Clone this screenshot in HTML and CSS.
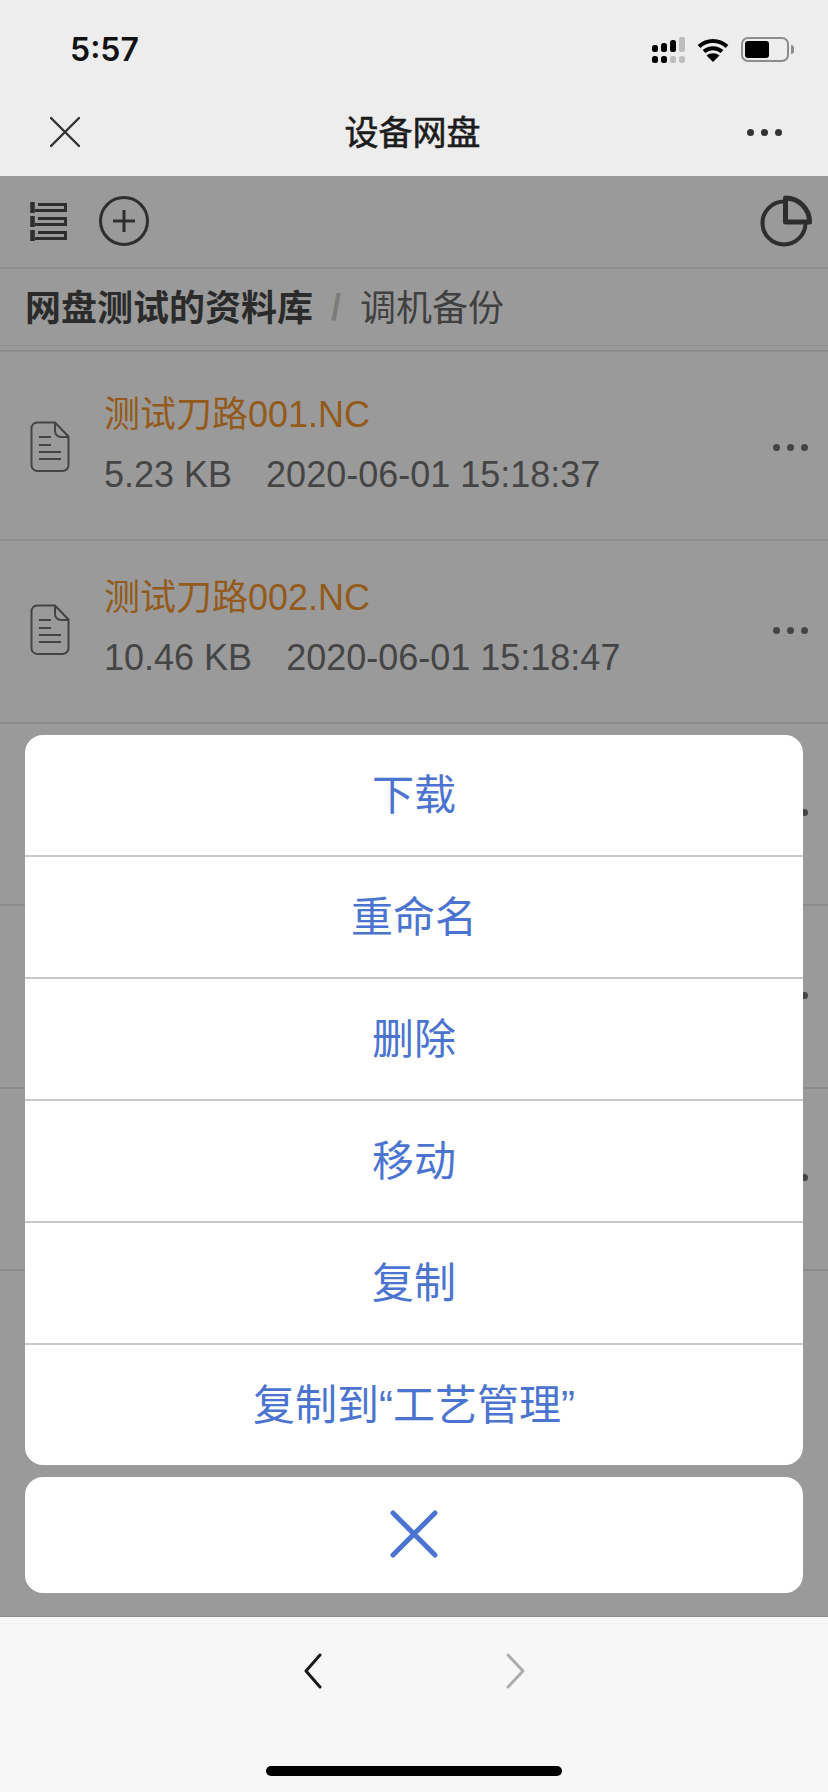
FILE: index.html
```html
<!DOCTYPE html>
<html lang="zh-CN">
<head>
    <meta charset="UTF-8">
    <meta name="viewport" content="width=device-width, initial-scale=1.0">
    <title>设备网盘</title>
    <link rel="stylesheet" href="styles.css">
</head>
<body>
    <div class="phone">
        <!-- Status bar -->
        <div class="status-bar">
            <span class="time">5:57</span>
            <div class="status-icons">
                <svg width="33" height="26" viewBox="0 0 33 26">
                    <g fill="#000">
                        <rect x="0" y="8" width="6" height="7" rx="2.500"/>
                        <rect x="9" y="6" width="6" height="9" rx="2.500"/>
                        <rect x="18" y="3" width="6" height="12" rx="2.500"/>
                        <rect x="0" y="19" width="6" height="7" rx="2.500"/>
                        <rect x="9" y="19" width="6" height="7" rx="2.500"/>
                    </g>
                    <g fill="#bdbdbd">
                        <rect x="27" y="0" width="6" height="15" rx="2"/>
                        <rect x="18" y="19" width="6" height="7" rx="2.500"/>
                        <rect x="27" y="19" width="6" height="7" rx="2.500"/>
                    </g>
                </svg>
                <svg width="32" height="24" viewBox="0 0 32 24">
                    <path d="M2 8.500C10 1 22 1 30 8.500M7 13.500C12 9 20 9 25 13.500" fill="none" stroke="#000" stroke-width="4"/>
                    <path d="M16 24l-6.500-6.500C13 14.500 19 14.500 22.500 17.500z" fill="#000"/>
                </svg>
                <div class="battery">
                    <div class="battery-body"><div class="battery-level"></div></div>
                    <div class="battery-cap"></div>
                </div>
            </div>
        </div>

        <!-- Title bar -->
        <header class="title-bar">
            <div class="title-side">
                <svg width="30" height="30" viewBox="0 0 30 30">
                    <path d="M1 1l28 28M29 1L1 29" fill="none" stroke="#333" stroke-width="2.400" stroke-linecap="round"/>
                </svg>
            </div>
            <h1 class="title">设备网盘</h1>
            <div class="title-side title-side-right">
                <div class="more-dots"><i></i><i></i><i></i></div>
            </div>
        </header>

        <div class="content">
            <!-- Toolbar -->
            <div class="toolbar">
                <div class="toolbar-left">
                    <svg width="38" height="40" viewBox="0 0 38 40">
                        <g fill="none" stroke="#2e2e2e">
                            <path stroke-width="4.500" d="M2.500 1v11M2.500 15v11M2.500 29v11"/>
                            <path stroke-width="3" d="M5 9.500h30.500v-6H8M5 23.500h30.500v-6H8M5 37.500h30.500v-6H8"/>
                        </g>
                    </svg>
                    <svg width="50" height="50" viewBox="0 0 50 50">
                        <circle cx="25" cy="25" r="23.500" fill="none" stroke="#2e2e2e" stroke-width="3"/>
                        <path d="M14 25h22M25 14v22" fill="none" stroke="#2e2e2e" stroke-width="3"/>
                    </svg>
                </div>
                <svg width="52" height="52" viewBox="0 0 52 52">
                    <path d="M24 6.500A21.500 21.500 0 1 0 45.500 28" fill="none" stroke="#2e2e2e" stroke-width="4"/>
                    <path d="M25.500 3A24 24 0 0 1 49.500 27H25.500z" fill="none" stroke="#2e2e2e" stroke-width="5" stroke-linejoin="round"/>
                </svg>
            </div>

            <!-- Breadcrumb -->
            <div class="breadcrumb">
                <span class="crumb-root">网盘测试的资料库</span>
                <span class="crumb-sep">/</span>
                <span class="crumb-current">调机备份</span>
            </div>

            <!-- Files -->
            <ul class="file-list">
                <li class="file-row">
                    <svg class="file-icon" width="40" height="52" viewBox="0 0 40 52">
                        <path d="M7 1.500h18l13.500 14V44a6 6 0 0 1-6 6H7a6 6 0 0 1-5.500-6V7A6 6 0 0 1 7 1.500zM25 1.500V10a6 6 0 0 0 6 6h7.500M9 16h12M9 24h12M9 31h22M9 38h22" fill="none" stroke="#444" stroke-width="2"/>
                    </svg>
                    <div class="file-info">
                        <div class="file-name">测试刀路001.NC</div>
                        <div class="file-meta"><span>5.23 KB</span><span>2020-06-01 15:18:37</span></div>
                    </div>
                    <div class="more-dots row-dots"><i></i><i></i><i></i></div>
                </li>
                <li class="file-row">
                    <svg class="file-icon" width="40" height="52" viewBox="0 0 40 52">
                        <path d="M7 1.500h18l13.500 14V44a6 6 0 0 1-6 6H7a6 6 0 0 1-5.500-6V7A6 6 0 0 1 7 1.500zM25 1.500V10a6 6 0 0 0 6 6h7.500M9 16h12M9 24h12M9 31h22M9 38h22" fill="none" stroke="#444" stroke-width="2"/>
                    </svg>
                    <div class="file-info">
                        <div class="file-name">测试刀路002.NC</div>
                        <div class="file-meta"><span>10.46 KB</span><span>2020-06-01 15:18:47</span></div>
                    </div>
                    <div class="more-dots row-dots"><i></i><i></i><i></i></div>
                </li>
                <li class="file-row"><div class="more-dots row-dots push"><i></i><i></i><i></i></div></li>
                <li class="file-row"><div class="more-dots row-dots push"><i></i><i></i><i></i></div></li>
                <li class="file-row"><div class="more-dots row-dots push"><i></i><i></i><i></i></div></li>
            </ul>

            <!-- Action sheet lies over the list -->
            <div class="sheet">
                <div class="sheet-group">
                    <div class="sheet-item">下载</div>
                    <div class="sheet-item">重命名</div>
                    <div class="sheet-item">删除</div>
                    <div class="sheet-item">移动</div>
                    <div class="sheet-item">复制</div>
                    <div class="sheet-item">复制到“工艺管理”</div>
                </div>
                <div class="sheet-cancel">
                    <svg width="48" height="48" viewBox="0 0 48 48">
                        <path d="M3 3l42 42M45 3L3 45" fill="none" stroke="#4b74d0" stroke-width="5" stroke-linecap="round"/>
                    </svg>
                </div>
            </div>
        </div>

        <!-- Bottom browser nav -->
        <footer class="bottom-bar">
            <div class="nav-arrows">
                <svg width="20" height="36" viewBox="0 0 20 36">
                    <path d="M17 2L3 18l14 16" fill="none" stroke="#1a1a1a" stroke-width="3" stroke-linecap="round" stroke-linejoin="round"/>
                </svg>
                <svg width="20" height="36" viewBox="0 0 20 36">
                    <path d="M2 2l15 16L2 34" fill="none" stroke="#adadad" stroke-width="3" stroke-linecap="round" stroke-linejoin="round"/>
                </svg>
            </div>
            <div class="home-bar"></div>
        </footer>
    </div>
</body>
</html>
```
FILE: styles.css
```css
/* Reset and general styling */
* {
    margin: 0;
    padding: 0;
    box-sizing: border-box;
}

body {
    background-color: #f7f7f7;
    font-family: "Liberation Sans", "Noto Sans CJK SC", sans-serif;
    color: #333;
}

.phone {
    width: 828px;
    height: 1792px;
    display: flex;
    flex-direction: column;
    overflow: hidden;
}

/* Status bar */
.status-bar {
    height: 88px;
    background-color: #ededed;
    display: flex;
    justify-content: space-between;
    align-items: center;
    padding: 11px 34px 0 70px;
}

.time {
    font-family: Inter, "Liberation Sans", sans-serif;
    font-size: 32px;
    font-weight: 600;
    color: #111;
}

.status-icons {
    display: flex;
    align-items: center;
    gap: 12px;
}

.battery {
    display: flex;
    align-items: center;
    gap: 2px;
}

.battery-body {
    width: 48px;
    height: 25px;
    border: 2px solid #8d8d8d;
    border-radius: 7px;
    padding: 2px;
}

.battery-level {
    width: 24px;
    height: 100%;
    background-color: #000;
    border-radius: 3px;
}

.battery-cap {
    width: 3px;
    height: 9px;
    background-color: #8d8d8d;
    border-radius: 0 3px 3px 0;
}

/* Title bar */
.title-bar {
    height: 88px;
    background-color: #ededed;
    display: flex;
    align-items: center;
    padding: 0 46px 0 43px;
}

.title-side {
    flex: 1;
    display: flex;
    align-items: center;
    padding-left: 7px;
}

.title-side-right {
    justify-content: flex-end;
}

.title {
    font-size: 34px;
    font-weight: 400;
    color: #1c1c1c;
    -webkit-text-stroke: 0.6px #1c1c1c;
    margin-bottom: 4px;
}

.more-dots {
    display: flex;
    gap: 7px;
}

.more-dots i {
    display: block;
    width: 7px;
    height: 7px;
    border-radius: 50%;
    background-color: #333;
}

/* Dimmed page */
.content {
    position: relative;
    height: 1440px;
    background-color: #9a9a9a;
}

.toolbar {
    height: 93px;
    border-bottom: 2px solid #8c8c8c;
    display: flex;
    justify-content: space-between;
    align-items: center;
    padding: 0 16px 2px 30px;
}

.toolbar-left {
    display: flex;
    align-items: center;
    gap: 31px;
}

.breadcrumb {
    height: 83px;
    border-bottom: 2px solid #8c8c8c;
    box-shadow: inset 0 -4px 0 #9a9a9a, inset 0 -5px 0 #939393;
    display: flex;
    align-items: center;
    padding: 0 0 10px 25px;
    font-size: 36px;
}

.crumb-root {
    font-weight: 700;
    color: #2b2b2b;
}

.crumb-sep {
    font-weight: 700;
    color: #7c7c7c;
    margin: 6px 19px 0 18px;
}

.crumb-current {
    color: #404040;
}

.file-list {
    list-style: none;
    margin-top: 6.500px;
}

.file-row {
    height: 182.500px;
    border-bottom: 2px solid #8c8c8c;
    display: flex;
    align-items: center;
    padding: 0 20px 0 30px;
}

.file-icon {
    flex-shrink: 0;
    margin-top: -3px;
}

.file-info {
    flex: 1;
    margin-left: 34px;
    margin-top: -7px;
}

.file-name {
    font-size: 36px;
    line-height: 48px;
    color: #935a1b;
}

.file-meta {
    font-size: 36px;
    line-height: 48px;
    margin-top: 12px;
    color: #454545;
    display: flex;
    gap: 34px;
}

.row-dots {
    margin-bottom: 2px;
}

.row-dots i {
    background-color: #444;
}

.push {
    margin-left: auto;
}

/* Action sheet */
.sheet {
    position: absolute;
    left: 25px;
    right: 25px;
    top: 559px;
    display: flex;
    flex-direction: column;
    gap: 12px;
}

.sheet-group {
    background-color: #fff;
    border-radius: 18px;
    overflow: hidden;
}

.sheet-item {
    height: 122px;
    display: flex;
    align-items: center;
    justify-content: center;
    padding-bottom: 7px;
    font-size: 42px;
    color: #4b74d0;
    border-bottom: 2px solid #c8c8c8;
}

.sheet-item:last-child {
    height: 120px;
    border-bottom: none;
}

.sheet-cancel {
    height: 116px;
    background-color: #fff;
    border-radius: 18px;
    display: flex;
    align-items: center;
    justify-content: center;
    padding-bottom: 2px;
}

/* Bottom browser nav */
.bottom-bar {
    flex: 1;
    background-color: #f7f7f7;
    border-top: 1px solid #8c8c8c;
    display: flex;
    flex-direction: column;
    align-items: center;
}

.nav-arrows {
    display: flex;
    gap: 183px;
    margin-top: 36px;
}

.home-bar {
    width: 296px;
    height: 10px;
    margin-top: 77px;
    background-color: #000;
    border-radius: 5px;
}
```
